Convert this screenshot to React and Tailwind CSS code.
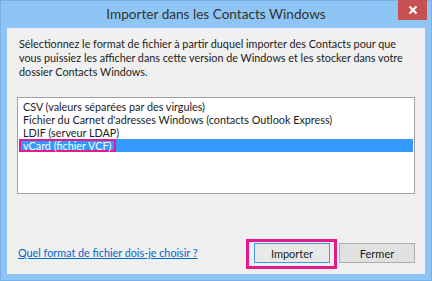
export default function App() {
  const font = { fontFamily: 'Lato, "Noto Sans", sans-serif' };
  return (
    <div
      className="w-[432px] h-[281px] bg-[#8ec5f4] border border-[#76b1e6] flex flex-col text-[#1b1b1b] text-[10.8px]"
      style={font}
    >
      <div className="relative h-[27px] flex items-center justify-center">
        <span className="text-[13.6px] text-[#333] leading-none">Importer dans les Contacts Windows</span>
        <div className="absolute right-[4px] top-[-1px] w-[29px] h-[20px] bg-[#c75050] flex items-center justify-center">
          <svg width="10" height="10" viewBox="0 0 10 10">
            <path d="M1.5 1.5 L8.5 8.5 M8.5 1.5 L1.5 8.5" stroke="#fff" strokeWidth="2" />
          </svg>
        </div>
      </div>
      <div className="mx-[6px] h-[246px] bg-[#f0f0f0] border-t border-[#e7eef6] flex flex-col px-[10px] pt-[8px] pb-[11px]">
        <p className="pl-[2px] leading-[14px] whitespace-nowrap">
          Sélectionnez le format de fichier à partir duquel importer des Contacts pour que
          <br />
          vous puissiez les afficher dans cette version de Windows et les stocker dans votre
          <br />
          dossier Contacts Windows.
        </p>
        <div className="mt-[18px] h-[97px] bg-white border border-[#a0a0a0] pt-[2px] px-px">
          <div className="h-[13px] leading-[13px] pl-[4px] whitespace-nowrap">CSV (valeurs séparées par des virgules)</div>
          <div className="h-[13px] leading-[13px] pl-[4px] whitespace-nowrap">Fichier du Carnet d'adresses Windows (contacts Outlook Express)</div>
          <div className="h-[13px] leading-[13px] pl-[4px] whitespace-nowrap">LDIF (serveur LDAP)</div>
          <div className="h-[13px] leading-[13px] whitespace-nowrap bg-[#3399ff] text-white flex">
            <span className="h-[13px] pl-[2px] pr-[3px] border-2 border-[#e6198b] leading-[9px]">vCard (fichier VCF)</span>
          </div>
        </div>
        <div className="flex-1 flex items-end">
          <a className="pl-[1px] mb-[3px] text-[#0066cc] underline leading-[14px]">Quel format de fichier dois-je choisir ?</a>
          <div className="ml-auto flex gap-[9px]">
            <div className="relative">
              <button className="w-[76px] h-[20px] border border-[#3c9ae8] bg-[#e9e9e9] text-[11px] leading-none text-[#1b1b1b]">Importer</button>
              <div className="absolute -left-[8px] -right-[7px] -top-[4px] -bottom-[6px] border-[3px] border-[#e6198b]"></div>
            </div>
            <button className="w-[76px] h-[20px] border border-[#acacac] bg-[#e1e1e1] text-[11px] leading-none text-[#1b1b1b]">Fermer</button>
          </div>
        </div>
      </div>
    </div>
  );
}
